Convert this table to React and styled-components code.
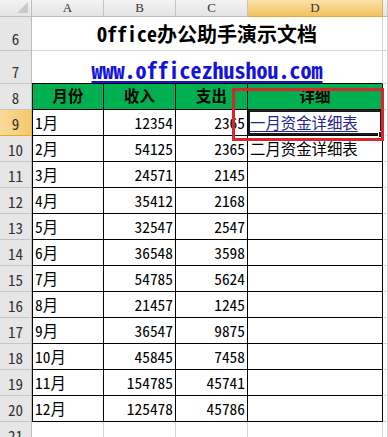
import React from "react";
import styled, { createGlobalStyle } from "styled-components";

const GlobalStyle = createGlobalStyle`
    html, body {
        margin: 0;
        padding: 0;
        background: #fff;
        overflow: hidden;
    }
`

const CELL_FONT = `"Noto Sans Mono CJK SC", "Liberation Mono", "Noto Sans CJK SC", monospace`;
const GRID = "#d4d4d4";

const Sheet = styled.div`
    position: relative;
    width: 388px;
    height: 437px;
    overflow: hidden;
    font-family: ${CELL_FONT};
    color: #000;
`

const Row = styled.div`
    display: flex;
    height: ${p => p.$h}px;
`

const Corner = styled.div`
    position: relative;
    width: 32px;
    flex: none;
    box-sizing: border-box;
    background: linear-gradient(#f3f3f3, #e4e4e4);
    border-right: 1px solid #bdbdbd;
    border-bottom: 1px solid #bdbdbd;

    &::after {
        content: "";
        position: absolute;
        right: 3px;
        bottom: 3px;
        border-style: solid;
        border-width: 0 0 11px 11px;
        border-color: transparent transparent #c9c9c9 transparent;
    }
`

const ColHead = styled.div`
    width: ${p => p.$w ? `${p.$w}px` : "auto"};
    flex: ${p => p.$w ? "none" : "1"};
    box-sizing: border-box;
    display: flex;
    align-items: center;
    justify-content: center;
    font-family: "Liberation Serif", serif;
    font-size: 13px;
    color: #333;
    background: ${p => p.$active
        ? "linear-gradient(#fbe1aa, #f1c25f)"
        : "linear-gradient(#f3f3f3, #e4e4e4)"};
    border-right: 1px solid ${p => p.$active ? "#e0b04a" : "#c5c5c5"};
    border-bottom: 1px solid ${p => p.$active ? "#e0a93a" : "#bdbdbd"};
`

const RowHead = styled.div`
    width: 32px;
    flex: none;
    box-sizing: border-box;
    display: flex;
    align-items: flex-end;
    justify-content: center;
    padding-bottom: 2px;
    font-family: ${CELL_FONT};
    font-size: 15px;
    line-height: 18px;
    color: #333;
    background: ${p => p.$active
        ? "linear-gradient(90deg, #f9db96, #f4c86d)"
        : "#e6e6e6"};
    border-right: 1px solid ${p => p.$active ? "#e0b04a" : "#bdbdbd"};
    border-bottom: 1px solid ${p => p.$active ? "#e0a93a" : "#c5c5c5"};
`

const Cell = styled.div`
    position: relative;
    width: ${p => p.$w ? `${p.$w}px` : "auto"};
    flex: ${p => p.$w ? "none" : "1"};
    box-sizing: border-box;
    display: flex;
    align-items: ${p => p.$center ? "center" : "flex-end"};
    justify-content: ${p => p.$align || "flex-start"};
    padding: 0 2px ${p => p.$pb ?? 4}px 2px;
    font-size: 15.4px;
    line-height: 18px;
    white-space: nowrap;
    background: ${p => p.$bg || "transparent"};
    font-weight: ${p => p.$bold ? 700 : 400};
    border-left: ${p => p.$first ? "1px solid #000" : "none"};
    border-right: 1px solid ${p => p.$dark ? "#000" : GRID};
    border-bottom: 1px solid ${p => p.$darkBottom || p.$dark ? "#000" : GRID};
    box-shadow: ${p => p.$selected ? "inset 0 0 0 2px #1b1b1b" : "none"};
`

const Title = styled.span`
    font-size: 20px;
    font-weight: 700;
    line-height: 24px;
`

const SiteLink = styled.a`
    font-size: 22px;
    font-weight: 700;
    line-height: 26px;
    color: #1414d8;
    text-decoration: underline;
    text-underline-offset: 2px;
`

const CellLink = styled.a`
    color: #25258f;
    text-decoration: underline;
    text-underline-offset: 2px;
`

const FillHandle = styled.span`
    position: absolute;
    right: -3px;
    bottom: -3px;
    width: 5px;
    height: 5px;
    background: #1b1b1b;
    border: 1px solid #fff;
    z-index: 2;
`

const Highlight = styled.div`
    position: absolute;
    left: 232px;
    top: 88px;
    width: 152px;
    height: 53px;
    box-sizing: border-box;
    border: 3px solid #d7262e;
    pointer-events: none;
    z-index: 3;
`

const COLS = [72, 72, 72, 135];
const MERGED = COLS.reduce((a, b) => a + b, 0);

const data = [
    ["1月", 12354, 2365, "一月资金详细表"],
    ["2月", 54125, 2365, "二月资金详细表"],
    ["3月", 24571, 2145, ""],
    ["4月", 35412, 2168, ""],
    ["5月", 32547, 2547, ""],
    ["6月", 36548, 3598, ""],
    ["7月", 54785, 5624, ""],
    ["8月", 21457, 1245, ""],
    ["9月", 36547, 9875, ""],
    ["10月", 45845, 7458, ""],
    ["11月", 154785, 45741, ""],
    ["12月", 125478, 45786, ""],
];

const heads = ["月份", "收入", "支出", "详细"];

function App() {
    return (
        <>
            <GlobalStyle />
            <Sheet>
                <Row $h={17}>
                    <Corner />
                    {["A", "B", "C", "D"].map((l, i) => (
                        <ColHead key={l} $w={COLS[i]} $active={l === "D"}>{l}</ColHead>
                    ))}
                    <ColHead />
                </Row>

                <Row $h={34}>
                    <RowHead>6</RowHead>
                    <Cell $w={MERGED} $align="center">
                        <Title>Office办公助手演示文档</Title>
                    </Cell>
                    <Cell />
                </Row>

                <Row $h={33}>
                    <RowHead>7</RowHead>
                    <Cell $w={MERGED} $align="center" $darkBottom $pb={1}>
                        <SiteLink>www.officezhushou.com</SiteLink>
                    </Cell>
                    <Cell />
                </Row>

                <Row $h={26}>
                    <RowHead>8</RowHead>
                    {heads.map((h, i) => (
                        <Cell key={h} $w={COLS[i]} $first={i === 0} $dark $bold $center
                            $align="center" $bg="#00b050">
                            {h}
                        </Cell>
                    ))}
                    <Cell />
                </Row>

                {data.map((r, idx) => (
                    <Row $h={26} key={r[0]}>
                        <RowHead $active={idx === 0}>{idx + 9}</RowHead>
                        <Cell $w={COLS[0]} $first $dark>{r[0]}</Cell>
                        <Cell $w={COLS[1]} $dark $align="flex-end">{r[1]}</Cell>
                        <Cell $w={COLS[2]} $dark $align="flex-end">{r[2]}</Cell>
                        <Cell $w={COLS[3]} $dark $selected={idx === 0}>
                            {idx === 0 ? <CellLink>{r[3]}</CellLink> : r[3]}
                            {idx === 0 && <FillHandle />}
                        </Cell>
                        <Cell />
                    </Row>
                ))}

                <Row $h={26}>
                    <RowHead>21</RowHead>
                    {COLS.map((w, i) => <Cell key={i} $w={w} />)}
                    <Cell />
                </Row>

                <Highlight />
            </Sheet>
        </>
    );
}

export default App;
